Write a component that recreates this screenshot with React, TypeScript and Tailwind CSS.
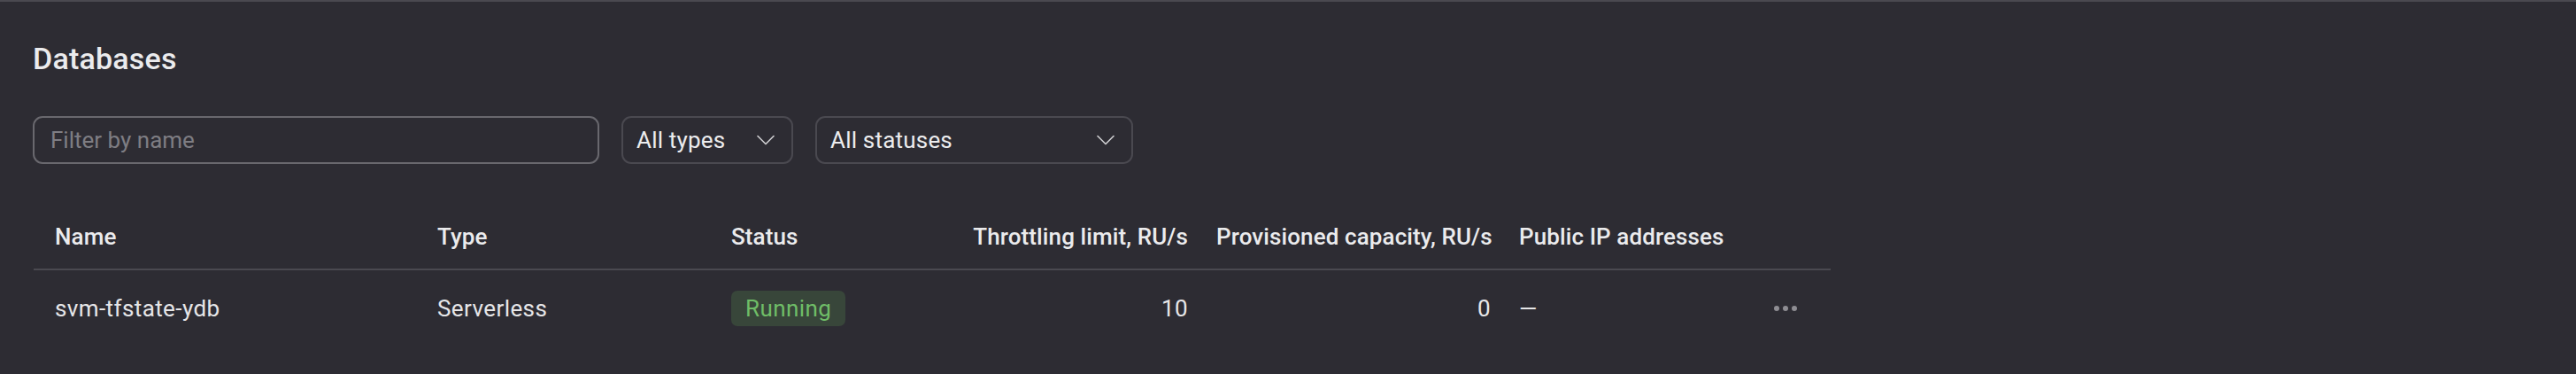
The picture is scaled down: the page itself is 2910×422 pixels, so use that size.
import React from "react";

const FONT = "font-['Roboto','Liberation_Sans',sans-serif]";

function Chevron() {
  return (
    <svg width="20" height="12" viewBox="0 0 20 12" fill="none">
      <path d="M1 1.5L10 10.5L19 1.5" stroke="#cfcfd2" strokeWidth="1.6" strokeLinecap="round" strokeLinejoin="round" />
    </svg>
  );
}

function Select({ label, width }: { label: string; width: string }) {
  return (
    <button
      type="button"
      className={`${width} h-[54px] flex items-center justify-between rounded-[11px] border-2 border-[#4a4950] pl-[15px] pr-[19px] text-[26px] tracking-[0.2px] text-[#ececee]`}
    >
      <span>{label}</span>
      <Chevron />
    </button>
  );
}

const rows = [
  { name: "svm-tfstate-ydb", type: "Serverless", status: "Running", limit: "10", capacity: "0", ip: "—" },
];

export default function App() {
  return (
    <div className={`${FONT} min-h-[422px] w-full bg-[#2d2c33] border-t-2 border-[#4a4950] text-[#e9e9eb]`}>
      <div className="pl-[37px] pt-[44px]">
        <h1 className="text-[34px] leading-[40px] font-medium tracking-[0.2px] text-[#ebebed]">Databases</h1>

        {/* Filters */}
        <div className="mt-[45px] flex items-center gap-[25px]">
          <input
            placeholder="Filter by name"
            className="w-[640px] h-[54px] rounded-[11px] border-2 border-[#69686e] bg-transparent px-[18px] text-[26px] text-[#ececee] placeholder:text-[#7e7d83] outline-none"
          />
          <Select label="All types" width="w-[194px]" />
          <Select label="All statuses" width="w-[359px]" />
        </div>

        {/* Table */}
        <div className="ml-px w-[2030px]">
          <div className="flex pt-[66px] pb-[20px] border-b-2 border-[#4a4950] text-[26px] leading-[32px] font-medium tracking-[0.1px] text-[#ebebed]">
            <div className="w-[440px] pl-6">Name</div>
            <div className="w-[332px] px-4">Type</div>
            <div className="w-[272px] px-4">Status</div>
            <div className="w-[276px] px-4 text-right whitespace-nowrap">Throttling limit, RU/s</div>
            <div className="w-[342px] px-4 text-right whitespace-nowrap">Provisioned capacity, RU/s</div>
            <div className="w-[288px] px-4 whitespace-nowrap">Public IP addresses</div>
            <div className="w-[80px]" />
          </div>
          {rows.map(r => (
            <div key={r.name} className="flex items-center h-[86px] text-[26px] leading-[32px] tracking-[0.4px] text-[#e6e6e8]">
              <div className="w-[440px] pl-6">{r.name}</div>
              <div className="w-[332px] px-4">{r.type}</div>
              <div className="w-[272px] px-4">
                <span className="inline-flex items-center h-[40px] px-4 rounded-[7px] bg-[#38463a] text-[#6fbd67]">
                  {r.status}
                </span>
              </div>
              <div className="w-[276px] px-4 text-right">{r.limit}</div>
              <div className="w-[342px] px-4 text-right">{r.capacity}</div>
              <div className="w-[288px] px-4">{r.ip}</div>
              <div className="w-[80px] pl-4 flex items-center gap-1">
                <span className="w-[6px] h-[6px] rounded-full bg-[#8e8d93]" />
                <span className="w-[6px] h-[6px] rounded-full bg-[#8e8d93]" />
                <span className="w-[6px] h-[6px] rounded-full bg-[#8e8d93]" />
              </div>
            </div>
          ))}
        </div>
      </div>
    </div>
  );
}
